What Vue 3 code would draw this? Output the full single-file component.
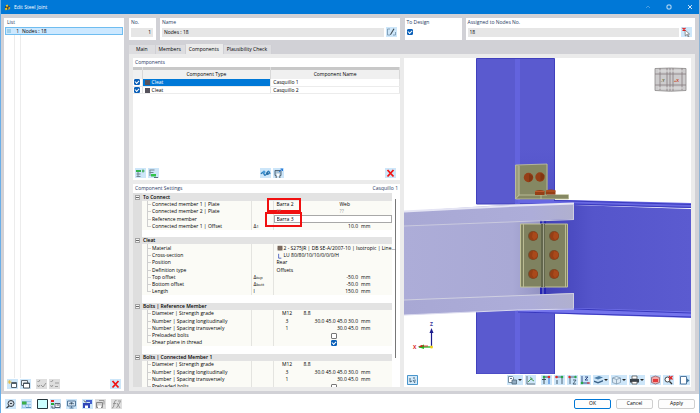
<script setup>
import { ref } from 'vue'

const tabs = ['Main', 'Members', 'Components', 'Plausibility Check']
const activeTab = ref('Components')

const components = ref([
  { on: true, type: 'Cleat', name: 'Casquillo 1', selected: true },
  { on: true, type: 'Cleat', name: 'Casquillo 2', selected: false },
])

const bolts = [
  { label: 'Diameter | Strength grade', kind: 'bolt', a: 'M12', b: '8.8' },
  { label: 'Number | Spacing longitudinally', kind: 'bolt', a: '3', value: '30.0 45.0 45.0 30.0', unit: 'mm' },
  { label: 'Number | Spacing transversely', kind: 'bolt', a: '1', value: '30.0 45.0', unit: 'mm' },
  { label: 'Preloaded bolts', kind: 'check', checked: false },
]

const rows = [
  { section: 'To Connect' },
  { label: 'Connected member 1 | Plate', kind: 'pair', a: 'Barra 2', b: 'Web', mark: true },
  { label: 'Connected member 2 | Plate', kind: 'pair', a: '??', b: '??', muted: true },
  { label: 'Reference member', kind: 'edit', a: 'Barra 3', mark: true },
  { label: 'Connected member 1 | Offset', kind: 'num', sym: '1', value: '10.0', unit: 'mm', last: true },
  { blank: true },
  { section: 'Cleat' },
  { label: 'Material', kind: 'text', icon: 'swatch', a: '2 - S275JR | DB SE-A/2007-10 | Isotropic | Line...' },
  { label: 'Cross-section', kind: 'text', icon: 'angle', a: 'LU 80/80/10/10/0/0/0/H' },
  { label: 'Position', kind: 'text', a: 'Rear' },
  { label: 'Definition type', kind: 'text', a: 'Offsets' },
  { label: 'Top offset', kind: 'num', sym: 'top', value: '-50.0', unit: 'mm' },
  { label: 'Bottom offset', kind: 'num', sym: 'bott', value: '-50.0', unit: 'mm' },
  { label: 'Length', kind: 'num', plain: 'l', value: '150.0', unit: 'mm', last: true },
  { blank: true },
  { section: 'Bolts | Reference Member' },
  ...bolts,
  { label: 'Shear plane in thread', kind: 'check', checked: true, last: true },
  { blank: true },
  { section: 'Bolts | Connected Member 1' },
  ...bolts,
]

const icons = {
  newItem: '<path d="M4.500 3.500h5v5h-5z" fill="#fff" stroke="#52606c"/><path d="M4 4.500h6" stroke="#52606c"/><path d="M2.500 1v4M.5 3h4M1 1.500l3 3M4 1.500l-3 3" stroke="#e6b93c" stroke-width=".7"/>',
  copy: '<path d="M1.500 1.500h6v5h-6z" fill="#eef3f8" stroke="#5c6873"/><path d="M3.500 4h6v5h-6z" fill="#fff" stroke="#48545f"/><path d="M3.500 4.500h6" stroke="#48545f"/>',
  checkAll: '<path d="M1.500 2l1 1 1.500-2M1.500 6l1 2 1.500-2M5 6l2 2 3-4" fill="none" stroke="#8f8f8f" stroke-width=".9"/>',
  checkInv: '<path d="M1.500 2l1 1 1.500-2M1.500 6l1 2 1.500-2M6 4h4M6 7.500h3" fill="none" stroke="#949494" stroke-width=".9"/>',
  remove: '<path d="M2.500 2l6 6.500M8.500 2l-6 6.500" stroke="#f01414" stroke-width="1.800"/>',
  find: '<circle cx="6" cy="4.500" r="3" fill="#cfd8e0" stroke="#36404a"/><path d="M4 7L1.500 9" stroke="#36404a" stroke-width="1.300"/><path d="M5 4.500h2" stroke="#36404a"/>',
  units: '<path d="M1 2h9v7H1z" fill="#9cc8ee"/><path d="M1 2.500h4.500v3H1z" fill="#3fae49"/><path d="M6 4h4M2 7h2M5 7h2M8 7h2" stroke="#fff"/><path d="M5 8.500h5" stroke="#5c8fb8"/>',
  pane: '<path d="M.5.5h10v9H.5z" fill="#ccffff" stroke="#26363c"/>',
  tree: '<path d="M1 1h3v2H1z" fill="#e02020"/><path d="M1 4h3v2H1z" fill="#25a83b"/><path d="M2 7v2h3M5 4.500h5v4H5z" fill="#fff" stroke="#405266" stroke-width=".9"/><path d="M6.500 6h2.500" stroke="#405266"/>',
  monitor: '<path d="M1.500 2h8v5h-8z" fill="#d7e7f4" stroke="#56799a"/><path d="M5.500 7v2M3.500 9h4M3 5q2.500-3 5 0" fill="none" stroke="#56799a"/><circle cx="5.500" cy="4.500" r="1" fill="#456"/>',
  saveUser: '<path d="M1 4h7v5H1z" fill="#2f46b8"/><path d="M3 6.500h3V9H3z" fill="#fff"/><path d="M4 1h6v4H8V3H4z" fill="#4460cf"/><path d="M2 1.500l2 2" stroke="#333"/>',
  saveGray: '<path d="M1.500 3.500h6v5h-6z" fill="#d0d0d0" stroke="#888"/><path d="M3 6.500h3V9H3z" fill="#fff"/><path d="M4 1.500h5v4" fill="none" stroke="#999"/>',
  fx: '<path d="M5.500 1.500q-1.500-.7-2 1.500l-1 5q-.3 1-1.500.8M2 4.500h3M6 4l3 5M9.500 2.500L5.500 9M7 2h3" fill="none" stroke="#909090" stroke-width=".9"/>',
  insBefore: '<path d="M1 2h5v2H1z" fill="#31b44b"/><path d="M1.500 6h4M1.500 8.500h4M3 4v5" stroke="#748694" fill="none"/><path d="M7 3h2.500M8 1.500v3" stroke="#31a548"/>',
  insAfter: '<path d="M3 6h5v2.500H3z" fill="#31c44b"/><path d="M1.500 2h5M1.500 4.500h4M2 2v6" stroke="#748694" fill="none"/><path d="M6 9.500h4" stroke="#58707f"/>',
  library: '<path d="M1 6q2-3 3 0t3-1 3 1" fill="none" stroke="#2679b8" stroke-width="1.300"/><circle cx="4" cy="4" r="1.500" fill="#4a9bd8"/><circle cx="7.500" cy="5.500" r="1.500" fill="#2b6fa3"/>',
  cart: '<path d="M2 2.500h6v5H2z" fill="#a9c3d6" stroke="#4a5f70" stroke-width=".9"/><path d="M3.500 5.500h3V8h-3z" fill="#fff"/><path d="M2.500 9h1.500M6 9h1.500" stroke="#333"/><path d="M6 4L9.500 1M7.500 1h2v2" fill="none" stroke="#2679d8"/>',
  edit: '<path d="M4 2H1.500v6H4M7 8h2.500V5" fill="none" stroke="#7b9ab3" stroke-width=".9"/><path d="M4 7.500L7.500 1.500l1 .6L4.800 8z" fill="#3b464f"/>',
  pick: '<path d="M4 3l4.500 4-2 .2L8 9.500l-1 .3-1.200-2.200L4.300 9z" fill="#fff" stroke="#555" stroke-width=".6"/><path d="M1.500 1l3 2.500M4.500 1l-3 2.500" stroke="#e02020" stroke-width="1.200"/>',
  select: '<path d="M.5.5h10v9H.5z" fill="#d4eafa" stroke="#4a96cc"/><path d="M3 3v4l2-1M6 3h2M6 5l2 3M8 4.500v2" fill="none" stroke="#375a75" stroke-width=".9"/>',
  display: '<path d="M1.500 1.500h4l1 1v5h-5z" fill="#fff" stroke="#6a8396" stroke-width=".9"/><path d="M5 5h4.500v4H5z" fill="#8fabc2" stroke="#50697c" stroke-width=".8"/><path d="M3 3.500h2" stroke="#5a7386"/>',
  axes: '<path d="M2 1v8h8" fill="none" stroke="#5c6973" stroke-width=".9"/><path d="M3 7l3-3 3 2" fill="none" stroke="#4f9a57"/><path d="M5 1.500l3 2.500-2 1z" fill="#58a868"/>',
  viewX: '<path d="M3 9V2h5M1 4.500h4" fill="none" stroke="#34414b" stroke-width=".9"/><circle cx="3" cy="2" r="1.300" fill="#27a84a"/><circle cx="8" cy="2" r="1.300" fill="#e02a2a"/><path d="M8 3v6" stroke="#246fd0"/>',
  viewY: '<path d="M2 2h6v7" fill="none" stroke="#435b6f" stroke-width=".9"/><path d="M3 5v4" stroke="#435b6f"/><circle cx="2.500" cy="2" r="1.300" fill="#e02a2a"/><circle cx="8" cy="2" r="1.300" fill="#27a84a"/>',
  viewZ: '<path d="M2 2h7M3 2v7M6 5h3l-3 4h3" fill="none" stroke="#435b6f" stroke-width=".9"/><circle cx="8.500" cy="2" r="1.200" fill="#27a84a"/><circle cx="2.500" cy="2" r="1.200" fill="#e02a2a"/>',
  viewNeg: '<path d="M2 1v7h7M5 2h3L5 5h3" fill="none" stroke="#27407c" stroke-width=".9"/><circle cx="2" cy="8" r="1.300" fill="#27a84a"/><path d="M7 8h3" stroke="#e02a2a"/>',
  layers: '<path d="M1 3l5-2 4 1.500-5 2z" fill="#4f7fa8"/><path d="M1 5.500l4 1.500 5-2v1.500l-5 2L1 7z" fill="#3b6288"/>',
  cube: '<path d="M1.500 3l4-1.500 4 1.500v4.500l-4 1.500-4-1.500z" fill="#dceaf5" stroke="#819bb0" stroke-width=".8"/><path d="M1.500 3l4 1.500 4-1.500M5.500 4.500V9" fill="none" stroke="#819bb0" stroke-width=".8"/>',
  print: '<path d="M3 1h5v3H3z" fill="#fff" stroke="#444" stroke-width=".7"/><path d="M1 4h9v3.500H1z" fill="#3a434c"/><path d="M3 6.500h5V9H3z" fill="#fff" stroke="#444" stroke-width=".7"/>',
  clipBox: '<path d="M1.500 2.500l4-1.500 4 1.500v5l-4 1.500-4-1.500z" fill="#f3a7a7" stroke="#8a6571" stroke-width=".8"/><path d="M3 4h5v3H3z" fill="#e33b3b"/>',
  noZoom: '<circle cx="4.500" cy="4.500" r="2.500" fill="#fff" stroke="#333" stroke-width=".9"/><path d="M6.500 6.500L9 9" stroke="#333" stroke-width="1.300"/><path d="M6 1l3.500 3.500M9.500 1L6 4.500" stroke="#e02020" stroke-width="1.200"/>',
  window: '<path d="M1.500 1.500h6v7.500h-6z" fill="#fff" stroke="#5279a0"/><path d="M8 3.500l2.500 2L8 7.500z" fill="#43759c"/>',
  swatch: '<path d="M1 1h9v8.500H1z" fill="#75645a"/><path d="M1 5.500h9M5.500 1v8.500" stroke="#8b7a70"/>',
  angle: '<path d="M3 1v8h5" fill="none" stroke="#2f48b8" stroke-width="1.400"/>',
}

const listTools = [
  { icon: 'newItem', label: 'New' },
  { icon: 'copy', label: 'Copy' },
  { icon: 'checkAll', label: 'Select all', off: true, gap: true },
  { icon: 'checkInv', label: 'Invert selection', off: true },
]
const footTools = [
  { icon: 'find', label: 'Find' },
  { icon: 'units', label: 'Units', gap: true },
  { icon: 'pane', label: 'Color', gap: true },
  { icon: 'tree', label: 'Structure' },
  { icon: 'monitor', label: 'Display', gap: true },
  { icon: 'saveUser', label: 'Save default', gap: true },
  { icon: 'saveGray', label: 'Load default', off: true },
  { icon: 'fx', label: 'Formula', gap: true, off: true },
]
const viewTools = [
  { icon: 'display', label: 'Display properties', menu: true },
  { icon: 'axes', label: 'Show axes' },
  { icon: 'viewX', label: 'View in X', gap: true },
  { icon: 'viewY', label: 'View in Y' },
  { icon: 'viewZ', label: 'View in Z' },
  { icon: 'viewNeg', label: 'View in -Z' },
  { icon: 'layers', label: 'Layers', menu: true },
  { icon: 'cube', label: 'Rendering', menu: true },
  { icon: 'print', label: 'Print', menu: true },
  { icon: 'clipBox', label: 'Clipping box', gap: true },
  { icon: 'noZoom', label: 'Reset zoom' },
  { icon: 'window', label: 'Detach view', gap: true },
]
const boltSpots = [
  [129, 178], [150, 178], [129, 197], [150, 197], [129, 216], [150, 216],
]
</script>

<template>
  <div class="window">
    <header class="titlebar">
      <svg class="app-icon" viewBox="0 0 8 8" aria-hidden="true">
        <path d="M1 3l3-2 3 2-2 3-3 1z" fill="#38424a" />
        <path d="M2 1.500l2-1 1 2-2 1zM1 5l2-1 1 2-2 1.500z" fill="#f2c81e" />
        <path d="M5 4l2-1v2L5 7z" fill="#d8a420" />
      </svg>
      <h1>Edit Steel Joint</h1>
      <div class="win-controls">
        <button class="dim" aria-label="Collapse"><svg viewBox="0 0 6 6"><path d="M1 4l2-2 2 2" /></svg></button>
        <button aria-label="Maximize"><svg viewBox="0 0 6 6"><rect x="1" y="1" width="4" height="4" rx="1" /></svg></button>
        <button aria-label="Close"><svg viewBox="0 0 6 6"><path d="M1 1l4 4M5 1L1 5" /></svg></button>
      </div>
    </header>

    <main class="content">
      <aside class="panel list">
        <h2>List</h2>
        <div class="list-body">
          <button class="list-row"><i></i><span class="num">1</span><span>Nodes : 18</span></button>
        </div>
        <div class="tools list-tools">
          <button v-for="t in listTools" :key="t.icon" class="tool" :class="{ off: t.off, gap: t.gap }" :aria-label="t.label">
            <svg viewBox="0 0 11 10" v-html="icons[t.icon]"></svg>
          </button>
          <span class="spring"></span>
          <button class="tool" aria-label="Delete"><svg viewBox="0 0 11 10" v-html="icons.remove"></svg></button>
        </div>
      </aside>

      <section class="work">
        <div class="fields">
          <div class="field-group">
            <div class="panel field no">
              <label for="no">No.</label>
              <div class="line"><input id="no" value="1" readonly></div>
            </div>
            <div class="panel field grow">
              <label for="name">Name</label>
              <div class="line">
                <input id="name" value="Nodes : 18" readonly>
                <button class="tool" aria-label="Edit name"><svg viewBox="0 0 11 10" v-html="icons.edit"></svg></button>
              </div>
            </div>
          </div>
          <div class="field-group">
            <div class="panel field design">
              <label for="design">To Design</label>
              <div class="line"><input id="design" type="checkbox" checked></div>
            </div>
            <div class="panel field grow">
              <label for="nodes">Assigned to Nodes No.</label>
              <div class="line">
                <input id="nodes" class="tint" value="18">
                <button class="tool" aria-label="Pick nodes"><svg viewBox="0 0 11 10" v-html="icons.pick"></svg></button>
              </div>
            </div>
          </div>
        </div>

        <nav class="tabs">
          <button v-for="t in tabs" :key="t" :class="{ active: t === activeTab }" @click="activeTab = t">{{ t }}</button>
        </nav>

        <div class="body">
          <div class="left">
            <section class="panel comps">
              <h2>Components</h2>
              <table class="comp-table">
                <colgroup><col class="c-check"><col><col></colgroup>
                <thead>
                  <tr class="strip"><td></td><td></td><td></td></tr>
                  <tr><th></th><th>Component Type</th><th>Component Name</th></tr>
                </thead>
                <tbody>
                  <tr v-for="c in components" :key="c.name" :class="{ selected: c.selected }">
                    <td><input v-model="c.on" type="checkbox" :aria-label="c.name"></td>
                    <td class="type"><i class="chip"></i>{{ c.type }}</td>
                    <td>{{ c.name }}</td>
                  </tr>
                </tbody>
              </table>
              <div class="tools comp-tools">
                <button class="tool" aria-label="Insert before"><svg viewBox="0 0 11 10" v-html="icons.insBefore"></svg></button>
                <button class="tool" aria-label="Insert after"><svg viewBox="0 0 11 10" v-html="icons.insAfter"></svg></button>
                <span class="spring"></span>
                <button class="tool" aria-label="Library"><svg viewBox="0 0 11 10" v-html="icons.library"></svg></button>
                <button class="tool" aria-label="Save component"><svg viewBox="0 0 11 10" v-html="icons.cart"></svg></button>
                <span class="spring"></span>
                <button class="tool" aria-label="Delete component"><svg viewBox="0 0 11 10" v-html="icons.remove"></svg></button>
              </div>
            </section>

            <section class="panel settings">
              <div class="settings-head"><h2>Component Settings</h2><span>Casquillo 1</span></div>
              <div class="scroll">
                <table class="prop-table">
                  <colgroup><col class="p-gutter"><col class="p-label"><col class="p-sym"><col></colgroup>
                  <tbody>
                    <tr v-for="(r, i) in rows" :key="i" :class="{ section: r.section, blank: r.blank, last: r.last }">
                      <td class="gutter"><i v-if="r.section" class="fold"></i></td>
                      <td v-if="r.section" colspan="3">{{ r.section }}</td>
                      <td v-else-if="r.blank" colspan="3"></td>
                      <template v-else>
                        <td class="label">{{ r.label }}</td>
                        <td class="sym"><template v-if="r.sym">Δ<small>{{ r.sym }}</small></template><template v-else>{{ r.plain }}</template></td>
                        <td class="val">
                          <div class="cell" :class="[r.kind, { muted: r.muted }]">
                            <template v-if="r.kind === 'pair'">
                              <span class="half">{{ r.a }}</span><span>{{ r.b }}</span>
                            </template>
                            <input v-else-if="r.kind === 'edit'" :value="r.a" :aria-label="r.label">
                            <template v-else-if="r.kind === 'text'">
                              <svg v-if="r.icon" viewBox="0 0 11 10" v-html="icons[r.icon]"></svg><span>{{ r.a }}</span>
                            </template>
                            <template v-else-if="r.kind === 'check'">
                              <input type="checkbox" :checked="r.checked" :aria-label="r.label">
                            </template>
                            <template v-else>
                              <span v-if="r.a" class="qty">{{ r.a }}</span>
                              <span v-if="r.b">{{ r.b }}</span>
                              <span class="value">{{ r.value }}</span>
                              <span class="unit">{{ r.unit }}</span>
                            </template>
                          </div>
                          <i v-if="r.mark" class="mark" :class="r.kind"></i>
                        </td>
                      </template>
                    </tr>
                  </tbody>
                </table>
                <div class="bar"><i></i></div>
              </div>
            </section>
          </div>

          <section class="panel view">
            <svg class="scene" viewBox="0 0 287 316" preserveAspectRatio="xMidYMin slice" role="img" aria-label="Steel joint model">
              <defs>
                <linearGradient id="top" x1="0" x2="1"><stop offset="0" stop-color="#a8a8d4" /><stop offset=".75" stop-color="#adadd9" /><stop offset="1" stop-color="#b0b0cf" /></linearGradient>
                <linearGradient id="web" x1="0" x2="1"><stop offset="0" stop-color="#adadd8" /><stop offset=".8" stop-color="#a9a9d5" /><stop offset="1" stop-color="#9494c3" /></linearGradient>
                <linearGradient id="shade" x1="0" x2="1"><stop offset="0" stop-color="#3e3eb4" /><stop offset=".35" stop-color="#5555cb" /><stop offset="1" stop-color="#5b5bd0" /></linearGradient>
                <linearGradient id="low" x1="0" x2="0" y1="0" y2="1"><stop offset="0" stop-color="#4b4bc4" stop-opacity="0" /><stop offset="1" stop-color="#4646bb" stop-opacity=".6" /></linearGradient>
              </defs>
              <path d="M72.500 .5H150.500V146H72.500z" fill="#5a5acf" stroke="#4040bd" />
              <path d="M111 1h5v145h-5z" fill="#6363de" />
              <path d="M116 90h34v56h-34z" fill="url(#low)" />
              <path d="M72.500 250H150.500V316H72.500z" fill="#5a5acf" stroke="#4040bd" />
              <path d="M111 253h5v63h-5z" fill="#6363de" />
              <path d="M114 142L166 142 287 145V150L170 147 114 145z" fill="#6767e2" />
              <path d="M150 142.500L287 146.500M170 146L287 149.500" stroke="#3a3abd" fill="none" />
              <path d="M136 160h34V147L287 151V257L170 251H136z" fill="url(#shade)" />
              <path d="M114 252L170 250 287 253.500V260L114 254.500z" fill="#7474ec" />
              <path d="M114 254L287 259M170 251L287 255" stroke="#3838bd" fill="none" />
              <path d="M0 166L136 161V238L0 243z" fill="url(#web)" />
              <path d="M136 161h6v76h-6z" fill="#2525b2" /><path d="M139 161v76" stroke="#8e8ed2" />
              <path d="M0 153.500L114 146 170 146V161L0 168z" fill="url(#top)" />
              <path d="M0 153.500L114 147.500 170 145.500" stroke="#e5e5f4" stroke-width="2" fill="none" />
              <path d="M0 168L170 161.500" stroke="#c9c9de" fill="none" />
              <path d="M0 242L170 235V250.500L114 252 0 257z" fill="url(#top)" />
              <path d="M0 242L170 235.500M169.500 146v15M169.500 236v14" stroke="#cfcfe0" fill="none" />
              <path d="M0 257L114 252 170 251" stroke="#d9d9ee" fill="none" />

              <path d="M111.500 107L143.500 106V137H165V141H111.500z" fill="#858863" />
              <path d="M111.500 107h4v31l-4 3z" fill="#9c9e7b" />
              <path d="M111.500 141V107L143 106V136.500H164.500V141H111.500L115 137H143M115 108v29M137 137v4" stroke="#c4c5a2" stroke-width=".8" fill="none" />
              <g fill="#963f16">
                <circle cx="124.500" cy="119.500" r="4.700" /><circle cx="136" cy="119" r="4.700" />
                <path d="M131 133q5-2 9.500 0v4h-9.500zM142 132.500q5-2 9.500 0v4H142z" />
              </g>
              <path d="M125 116l4 2-1 4-3 2zM136.500 115l4 2-1 4-3 2z" fill="#73300f" opacity=".6" />
              <path d="M131 133.500h9.500M142 133h9.500" stroke="#bd5a29" />

              <path d="M116.500 166H163.500V229H116.500z" fill="#7f8260" stroke="#c0c199" />
              <path d="M119.500 166v63M161.500 166v63" stroke="#babb94" />
              <path d="M137 166h4v63h-4z" fill="#62664c" /><path d="M139.500 166v63" stroke="#a2a48d" />
              <g v-for="(b, i) in boltSpots" :key="i">
                <circle :cx="b[0]" :cy="b[1]" r="5" fill="#6d5434" />
                <circle :cx="b[0] + 0.5" :cy="b[1]" r="4.500" fill="#963f16" />
                <path :d="`M${b[0]} ${b[1] - 4}l4 1.500v4l-3 2.500-2-3z`" fill="#a9491b" />
              </g>

              <path d="M251 10.500q15.500-1 31 0v22q-15.500 1.500-31 0z" fill="#cdcccd" stroke="#8a8888" stroke-width=".8" />
              <path d="M251 16h31M251 27h31M256 10v22M263 10v23M266 10v23M269 10v23M278 10v22" stroke="#857c7f" stroke-width=".8" fill="none" />
              <path d="M254 13h25M254 30h25" stroke="#e0e0e0" fill="none" />
              <text x="257" y="24" class="cube-y">-Y</text>
              <text x="270" y="24" class="cube-x">+X</text>

              <path d="M27.500 288V274" stroke="#1b1b8c" stroke-width="1.200" /><path d="M25.500 275l2-5 2 5z" fill="#1b1b8c" />
              <path d="M27 289H15" stroke="#22b522" stroke-width="1.300" /><path d="M20 286.500l-6 2.500 6 2z" fill="#22b522" />
              <path d="M18 287l-4 1.500 4 .5z" fill="#d81818" /><path d="M18 288h6" stroke="#d81818" stroke-width=".8" />
              <circle cx="27.500" cy="289" r="1.500" fill="#f2d21c" />
              <text x="26" y="268" class="axis-z">Z</text>
              <text x="9" y="291" class="axis-x">X</text>
            </svg>
            <div class="tools view-tools">
              <button class="tool" aria-label="Select mode"><svg viewBox="0 0 11 10" v-html="icons.select"></svg></button>
              <span class="spring"></span>
              <button v-for="t in viewTools" :key="t.icon" class="tool" :class="{ gap: t.gap, menu: t.menu }" :aria-label="t.label">
                <svg viewBox="0 0 11 10" v-html="icons[t.icon]"></svg><i v-if="t.menu" class="caret"></i>
              </button>
            </div>
          </section>
        </div>
      </section>
    </main>

    <footer class="footer">
      <div class="tools">
        <button v-for="t in footTools" :key="t.icon" class="tool" :class="{ gap: t.gap, off: t.off }" :aria-label="t.label">
          <svg viewBox="0 0 11 10" v-html="icons[t.icon]"></svg>
        </button>
      </div>
      <span class="spring"></span>
      <button class="action primary">OK</button>
      <button class="action">Cancel</button>
      <button class="action">Apply</button>
    </footer>
  </div>
</template>

<style>
body { margin: 0; }
</style>

<style scoped>
.window, .window * { box-sizing: border-box; }
.window {
  height: 100vh;
  display: flex;
  flex-direction: column;
  background: #d1d1d6;
  border-left: 1px solid #6aaee8;
  border-right: 1px solid #8fb5d6;
  font: 5px/7px "Open Sans", "Noto Sans", sans-serif;
  color: #000;
}
button, input { font: inherit; color: inherit; border: 0; padding: 0; margin: 0; background: none; min-width: 0; }
h1, h2 { margin: 0; font: inherit; }
h2, .field label { color: #1f3a62; }
.spring { flex: 1; }

.titlebar { flex: none; height: 14px; background: #0078d7; color: #fff; display: flex; align-items: center; gap: 3px; padding: 0 6px 0 3px; }
.app-icon { width: 7px; height: 7px; }
.win-controls { margin-left: auto; display: flex; gap: 15px; }
.win-controls button { width: 6px; height: 6px; display: flex; }
.win-controls svg { width: 6px; height: 6px; fill: none; stroke: #fff; stroke-width: .8; }
.win-controls .dim { opacity: .35; }

.content { flex: 1; min-height: 0; display: flex; gap: 5px; padding: 4px 4px 3px 3px; }
.panel { background: #fff; }
.list { flex: 0 0 120px; display: flex; flex-direction: column; padding-top: 1px; }
.list h2 { padding-left: 3px; }
.list-body {
  flex: 1;
  margin: 1px;
  background: linear-gradient(90deg, transparent 9px, #ececec 9px 10px, transparent 10px 15px, #ececec 15px 16px, transparent 16px);
}
.list-row { width: 100%; height: 8px; display: flex; align-items: center; border: 1px solid #6fbdf0; background: #cce8ff; text-align: left; }
.list-row i { width: 4px; height: 4px; margin-left: 1px; background: #9fd0ea; }
.list-row .num { width: 8px; margin-right: 3px; text-align: right; }

.tools { display: flex; gap: 2px; }
.tool { flex: none; height: 10px; min-width: 11px; background: #cde6f9; display: flex; align-items: center; }
.tool svg { width: 11px; height: 10px; }
.tool.off { background: #dedede; }
.list-tools { padding: 0 3px 2px 3px; }
.tool.gap { margin-left: 3px; }

.work { flex: 1; min-width: 0; display: flex; flex-direction: column; }
.fields { display: grid; grid-template-columns: 271fr 291fr; gap: 5px; }
.field-group { display: flex; gap: 4px; min-width: 0; }
.field { height: 22px; padding: 1px 3px 3px 2px; display: flex; flex-direction: column; justify-content: space-between; }
.field.no { width: 27px; }
.field.design { width: 57px; }
.grow { flex: 1; min-width: 0; }
.line { display: flex; gap: 2px; align-items: center; height: 10px; }
.line input:not([type]) { flex: 1; height: 9px; background: #e6e6e6; padding: 0 2px; }
.field.no input { text-align: right; }
.line .tint { background: #e6e6f3; }

input[type="checkbox"] { appearance: none; flex: none; display: block; width: 6px; height: 6px; border: 1px solid #777; border-radius: 1px; background: #fff; }
input[type="checkbox"]:checked { background: #0a5fb8; border-color: #0a5fb8; }
input[type="checkbox"]:checked::before { content: ""; display: block; width: 3px; height: 2px; border: solid #fff; border-width: 0 0 1px 1px; transform: rotate(-45deg); }

.tabs { display: flex; align-items: flex-end; height: 14px; padding-top: 4px; }
.tabs button { height: 9px; padding: 0 4px 0 3px; background: #dddde0; border-right: 1px solid #cfcfd4; }
.tabs button:first-child { padding: 0 7px; }
.tabs .active { height: 10px; background: #ebebeb; }

.body { flex: 1; min-height: 0; display: grid; grid-template-columns: 267fr 287fr; gap: 4px; padding: 4px; background: #ebebeb; }
.left { display: flex; flex-direction: column; gap: 4px; min-width: 0; min-height: 0; }
.comps { flex: 122; min-height: 0; display: flex; flex-direction: column; }
.comps h2 { padding: 1px 2px; height: 9px; }
table { border-collapse: collapse; table-layout: fixed; width: 100%; }
td, th { padding: 0; font-weight: inherit; }
.c-check { width: 9px; }
.strip td { height: 3px; background: #c8c8c8; border-right: 1px solid #ddd; }
.comp-table th { height: 9px; background: #f0f0f0; border-right: 1px solid #d8d8d8; }
.comp-table tbody td { height: 7px; padding-left: 2px; border-right: 1px solid #e6e6e6; border-bottom: 1px solid #ececec; line-height: 6px; }
.comp-table tbody td:first-child { padding-left: 1px; }
.chip { display: inline-block; width: 5px; height: 5px; margin-right: 2px; background: #55525c; vertical-align: -1px; }
.selected .type { background: #0078d7; color: #fff; }
.comp-tools { margin-top: auto; padding: 0 4px 2px 2px; }

.settings { flex: 203; min-height: 0; display: flex; flex-direction: column; }
.settings-head { display: flex; justify-content: space-between; height: 9px; padding: 1px 2px 0; color: #1f3a62; }
.scroll { flex: 1; min-height: 0; display: grid; grid-template-columns: 1fr 8px; overflow: hidden; }
.prop-table { align-self: start; }
.p-gutter { width: 9px; }
.p-label { width: 109px; }
.p-sym { width: 22px; }
.prop-table tr { height: 7px; background: #fbfbf6; }
.prop-table tr:nth-child(7n + 1), .prop-table tr:nth-child(7n + 4) { height: 8px; }
.prop-table td { white-space: nowrap; overflow: hidden; }
.prop-table .section td { background: #e3e3e3; padding-left: 1px; font-weight: 600; }
.prop-table .blank { background: #fff; }
.prop-table .gutter, .prop-table .section .gutter { background: #dedede; padding-left: 2px; }
.fold { display: block; width: 5px; height: 5px; border: 1px solid #a5a5a5; background: linear-gradient(#666, #666) center / 3px 1px no-repeat #f4f4f4; }
.prop-table .label {
  padding-left: 10px;
  border-right: 1px solid #e4e4e0;
  background: linear-gradient(#cfcfcf, #cfcfcf) 5px 0 / 1px 100% no-repeat, linear-gradient(#cfcfcf, #cfcfcf) 5px 50% / 4px 1px no-repeat;
}
.prop-table .last .label { background-size: 1px 50%, 4px 1px; }
.prop-table .sym { padding-left: 2px; border-right: 1px solid #e4e4e0; }
.sym small { font-size: 4px; }
.prop-table .val { position: relative; overflow: visible; }
.cell { display: flex; align-items: center; height: 7px; padding: 0 20px 0 3px; }
.cell svg { flex: none; width: 6px; height: 6px; margin-right: 1px; }
.cell.text { padding-right: 0; }
.cell .half { width: 63px; }
.cell.muted { color: #9a9a9a; }
.cell.edit { padding: 0; }
.cell.edit input { width: 100%; height: 8px; padding: 0 2px; border: 1px solid #a8a8a8; background: #fff; }
.cell.check { padding-left: 57px; }
.cell.bolt { padding-left: 0; }
.cell .qty { width: 30px; padding-right: 3px; text-align: center; }
.cell .value { margin-left: auto; padding-right: 3px; }
.cell .unit { width: 11px; }
.mark { position: absolute; inset: -3px auto -4px -7px; width: 34px; border: 2px solid #f01010; }
.mark.edit { left: -9px; width: 37px; }
.bar { padding: 6px 3px 0; background: #fff; }
.bar i { display: block; width: 1px; height: 83%; background: #777; }

.view { display: flex; flex-direction: column; min-width: 0; min-height: 0; }
.scene { flex: 1; min-height: 0; width: 100%; display: block; }
.view-tools { flex: none; padding: 1px 1px 2px 3px; }
.caret { margin-right: 1px; border: 2px solid transparent; border-top-color: #222; border-bottom: 0; }
.cube-y, .cube-x { font-size: 4px; font-weight: 700; }
.axis-z, .axis-x { font-size: 5px; font-weight: 700; }
.cube-y { fill: #6d7348; }
.cube-x { fill: #c8452c; }
.axis-z { fill: #3a3a9c; }
.axis-x { fill: #d81818; }

.footer { flex: none; height: 19px; background: #fff; display: flex; align-items: center; gap: 5px; padding: 0 4px; }
.action { width: 37px; height: 10px; border: 1px solid #cfcfcf; border-radius: 2px; background: #fdfdfd; }
.action.primary { border-color: #0078d7; }
</style>
